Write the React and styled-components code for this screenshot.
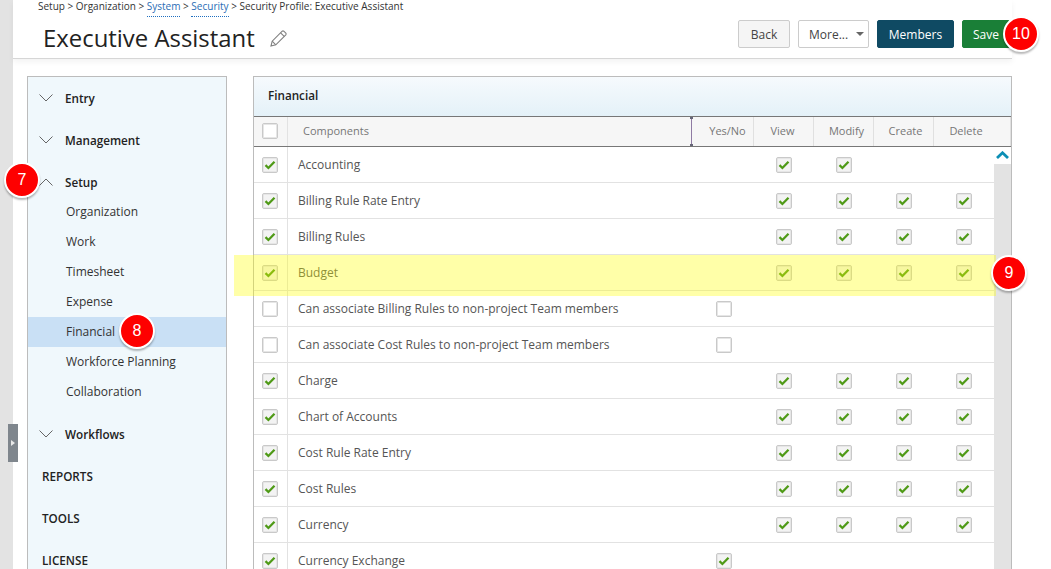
import React from "react";
import styled, { createGlobalStyle } from "styled-components";

const GlobalStyle = createGlobalStyle`
  html, body {
    margin: 0;
    padding: 0;
    background: #fff;
    overflow: hidden;
  }
  body {
    font-family: "Open Sans", "Liberation Sans", sans-serif;
  }
`;

const Page = styled.div`
  position: relative;
  display: flex;
  width: 1051px;
  height: 569px;
  overflow: hidden;
  background: #fff;
`;

const LeftStrip = styled.div`
  flex: 0 0 13px;
  background: #e3e3e3;
`;

const Handle = styled.div`
  position: absolute;
  left: 8px;
  top: 424px;
  width: 10px;
  height: 38px;
  background: #7f868d;
  display: flex;
  align-items: center;
  justify-content: center;
  &::after {
    content: "";
    border-left: 4px solid #e8e8e8;
    border-top: 3px solid transparent;
    border-bottom: 3px solid transparent;
  }
`;

const Content = styled.div`
  flex: 0 0 999px;
  display: flex;
  flex-direction: column;
`;

const Header = styled.header`
  flex: 0 0 59px;
  box-sizing: border-box;
  display: flex;
  justify-content: space-between;
  padding: 0 2px 0 25px;
  border-bottom: 1px solid #d6d6d6;
  box-shadow: 0 3px 6px rgba(0, 0, 0, 0.05);
`;

const Breadcrumb = styled.div`
  font-size: 10px;
  line-height: 12px;
  color: #333;
  white-space: nowrap;
  a {
    color: #2a6db5;
    border-bottom: 1px dotted #1f6fc0;
    padding-bottom: 3px;
  }
`;

const TitleRow = styled.div`
  display: flex;
  align-items: center;
  gap: 15px;
  margin: 8px 0 0 5px;
`;

const Title = styled.h1`
  margin: 0;
  font-size: 23.9px;
  line-height: 36px;
  font-weight: 400;
  color: #222;
`;

const Actions = styled.div`
  display: flex;
  gap: 8px;
  padding-top: 20px;
`;

const Button = styled.button`
  box-sizing: border-box;
  height: 28px;
  width: ${(p) => p.$w}px;
  padding: 0;
  border-radius: 2px;
  font-family: inherit;
  font-size: 12px;
  border: 1px solid ${(p) => p.$border || p.$bg};
  background: ${(p) => p.$bg};
  color: ${(p) => p.$color || "#fff"};
`;

const MoreButton = styled(Button)`
  display: flex;
  align-items: center;
  justify-content: space-between;
  padding: 0 4px 0 10px;
  &::after {
    content: "";
    border-top: 4px solid #666;
    border-left: 4px solid transparent;
    border-right: 4px solid transparent;
  }
`;

const Main = styled.div`
  display: flex;
  align-items: flex-start;
  gap: 26px;
  padding: 17px 0 0 14px;
`;

const Sidebar = styled.nav`
  flex: 0 0 200px;
  box-sizing: border-box;
  height: 520px;
  background: #f0f8fc;
  border: 1px solid #bcbcbc;
  color: #222;
`;

const NavHead = styled.div`
  display: flex;
  align-items: center;
  gap: 12px;
  height: 42px;
  box-sizing: border-box;
  padding: 0 0 1px 11px;
  font-size: 11.7px;
  font-weight: 600;
`;

const NavLabel = styled(NavHead)`
  padding-left: 14px;
`;

const SubList = styled.div`
  margin: -6px 0 6px;
`;

const SubItem = styled.div`
  height: 30px;
  line-height: 30px;
  padding-left: 38px;
  font-size: 12px;
  color: #333;
  background: ${(p) => (p.$active ? "#c9e0f5" : "transparent")};
`;

const Panel = styled.section`
  flex: 0 0 759px;
  box-sizing: border-box;
  height: 520px;
  border: 1px solid #bcbcbc;
  border-bottom: 0;
`;

const PanelTitle = styled.div`
  height: 39px;
  line-height: 36px;
  padding-left: 14px;
  font-size: 11.7px;
  font-weight: 600;
  color: #222;
  background: linear-gradient(#f6fafd, #e4f1f8);
  border-bottom: 1px solid #777;
`;

const HeadRow = styled.div`
  display: grid;
  grid-template-columns: 34px 1fr repeat(4, 60px) 77px;
  height: 29px;
  background: #f6f6f6;
  border-bottom: 1px solid #777;
  font-size: 11px;
  color: #777;
`;

const HeadCell = styled.div`
  display: flex;
  align-items: center;
  justify-content: ${(p) => (p.$left ? "flex-start" : "center")};
  padding: 0 ${(p) => p.$right || 0}px 2px ${(p) => p.$pad || 0}px;
  border-right: ${(p) => (p.$left ? "0" : "1px solid #e0e0e0")};
  box-sizing: border-box;
  position: relative;
`;

const Resizer = styled.div`
  position: absolute;
  right: 2px;
  top: 0;
  bottom: 0;
  width: 1px;
  background: #8f7ba3;
  &::before,
  &::after {
    content: "";
    position: absolute;
    left: -1px;
    width: 3px;
    height: 2px;
    background: #667;
  }
  &::before {
    top: 0;
  }
  &::after {
    bottom: 0;
  }
`;

const TableBody = styled.div`
  display: flex;
`;

const Rows = styled.div`
  flex: 1;
`;

const Row = styled.div`
  display: grid;
  grid-template-columns: 34px 1fr repeat(5, 60px);
  height: 36px;
  box-sizing: border-box;
  border-bottom: 1px solid #e2e2e2;
  font-size: 12px;
  color: #555;
`;

const CheckCell = styled.div`
  display: flex;
  align-items: center;
  justify-content: center;
  padding-bottom: ${(p) => (p.$head ? "1px" : "0")};
  padding-right: ${(p) => (p.$first ? "1px" : "0")};
  box-sizing: border-box;
  border-right: ${(p) => (p.$first ? "1px solid #e2e2e2" : "0")};
`;

const NameCell = styled.div`
  display: flex;
  align-items: center;
  padding-left: 10px;
  white-space: nowrap;
`;

const Box = styled.span`
  box-sizing: border-box;
  width: 16px;
  height: 16px;
  display: flex;
  align-items: center;
  justify-content: center;
  background: ${(p) => (p.$checked ? "#f3f3f3" : "#fff")};
  border: 1px solid #c9c9c9;
  border-radius: 2px;
  box-shadow: inset 0 0 0 1px #e6e6e6;
`;

const Scrollbar = styled.div`
  flex: 0 0 17px;
  background: linear-gradient(#fff 17px, #e3e3e3 17px);
  display: flex;
  justify-content: center;
  height: 423px;
  padding-top: 4px;
  box-sizing: border-box;
`;

const Highlight = styled.div`
  position: absolute;
  left: 234px;
  top: 255px;
  width: 762px;
  height: 41px;
  background: rgba(255, 255, 0, 0.34);
  pointer-events: none;
`;

const Badge = styled.div`
  position: absolute;
  left: ${(p) => p.$x - 18}px;
  top: ${(p) => p.$y - 18}px;
  width: 36px;
  height: 36px;
  box-sizing: border-box;
  border: 2px solid #fff;
  border-radius: 50%;
  background: #fe0000;
  color: #fff;
  font-family: "Liberation Sans", sans-serif;
  font-size: 16px;
  display: flex;
  align-items: center;
  justify-content: center;
  box-shadow: 0 2px 2px rgba(0, 0, 0, 0.28);
`;

const Check = () => (
  <svg width="12" height="10" viewBox="0 0 12 10">
    <path d="M1.5 5.2 L4.4 8 L10.5 1.8" fill="none" stroke="#4f9a17" strokeWidth="2.3" />
  </svg>
);

const CheckBox = ({ checked }) => <Box $checked={checked}>{checked && <Check />}</Box>;

const Chevron = ({ up }) => (
  <svg width="14" height="8" viewBox="0 0 14 8">
    <path d={up ? "M0.5 7.5 L7 1 L13.5 7.5" : "M0.5 0.5 L7 7 L13.5 0.5"} fill="none" stroke="#666" strokeWidth="1" />
  </svg>
);

const EditIcon = () => (
  <svg width="17" height="17" viewBox="0 0 17 17" fill="none" stroke="#808080" strokeWidth="1.1">
    <path d="M1 16 L2.2 11.2 L12.2 1.2 Q13 0.6 13.8 1.2 L15.8 3.2 Q16.4 4 15.8 4.8 L5.8 14.8 Z" />
    <path d="M10.6 2.8 L14.2 6.4 M2.2 11.2 L5.8 14.8" />
  </svg>
);

const subItems = ["Organization", "Work", "Timesheet", "Expense", "Financial", "Workforce Planning", "Collaboration"];

const ALL = [0, 1, 1, 1, 1];
const rows = [
  ["Accounting", [0, 1, 1, 0, 0]],
  ["Billing Rule Rate Entry", ALL],
  ["Billing Rules", ALL],
  ["Budget", ALL],
  ["Can associate Billing Rules to non-project Team members", ["off", 0, 0, 0, 0], false],
  ["Can associate Cost Rules to non-project Team members", ["off", 0, 0, 0, 0], false],
  ["Charge", ALL],
  ["Chart of Accounts", ALL],
  ["Cost Rule Rate Entry", ALL],
  ["Cost Rules", ALL],
  ["Currency", ALL],
  ["Currency Exchange", [1, 0, 0, 0, 0]],
];

export default function App() {
  return (
    <Page>
      <GlobalStyle />
      <LeftStrip />
      <Content>
        <Header>
          <div>
            <Breadcrumb>
              Setup &gt; Organization &gt; <a>System</a> &gt; <a>Security</a> &gt; Security Profile: Executive Assistant
            </Breadcrumb>
            <TitleRow>
              <Title>Executive Assistant</Title>
              <EditIcon />
            </TitleRow>
          </div>
          <Actions>
            <Button $w={52} $bg="#f5f5f5" $border="#ccc" $color="#444">Back</Button>
            <MoreButton $w={71} $bg="#fff" $border="#ccc" $color="#444">More...</MoreButton>
            <Button $w={77} $bg="#0f4a63">Members</Button>
            <Button $w={48} $bg="#1a7f37">Save</Button>
          </Actions>
        </Header>
        <Main>
          <Sidebar>
            <NavHead><Chevron />Entry</NavHead>
            <NavHead><Chevron />Management</NavHead>
            <NavHead><Chevron up />Setup</NavHead>
            <SubList>
              {subItems.map((s) => (
                <SubItem key={s} $active={s === "Financial"}>{s}</SubItem>
              ))}
            </SubList>
            <NavHead><Chevron />Workflows</NavHead>
            <NavLabel>REPORTS</NavLabel>
            <NavLabel>TOOLS</NavLabel>
            <NavLabel>LICENSE</NavLabel>
          </Sidebar>
          <Panel>
            <PanelTitle>Financial</PanelTitle>
            <HeadRow>
              <CheckCell $first $head><CheckBox /></CheckCell>
              <HeadCell $left $pad={15}>Components<Resizer /></HeadCell>
              <HeadCell $pad={8}>Yes/No</HeadCell>
              <HeadCell $right={2}>View</HeadCell>
              <HeadCell $pad={6}>Modify</HeadCell>
              <HeadCell $pad={4}>Create</HeadCell>
              <HeadCell $right={12}>Delete</HeadCell>
            </HeadRow>
            <TableBody>
              <Rows>
                {rows.map(([name, cols, first = true]) => (
                  <Row key={name}>
                    <CheckCell $first><CheckBox checked={first} /></CheckCell>
                    <NameCell>{name}</NameCell>
                    {cols.map((c, i) => (
                      <CheckCell key={i}>{c ? <CheckBox checked={c !== "off"} /> : null}</CheckCell>
                    ))}
                  </Row>
                ))}
              </Rows>
              <Scrollbar>
                <svg width="13" height="8" viewBox="0 0 13 8">
                  <path d="M1 7 L6.5 1.8 L12 7" fill="none" stroke="#0d8fb5" strokeWidth="2.8" />
                </svg>
              </Scrollbar>
            </TableBody>
          </Panel>
        </Main>
      </Content>
      <Handle />
      <Highlight />
      <Badge $x={22} $y={180}>7</Badge>
      <Badge $x={137} $y={331}>8</Badge>
      <Badge $x={1009} $y={273}>9</Badge>
      <Badge $x={1021} $y={34}>10</Badge>
    </Page>
  );
}
